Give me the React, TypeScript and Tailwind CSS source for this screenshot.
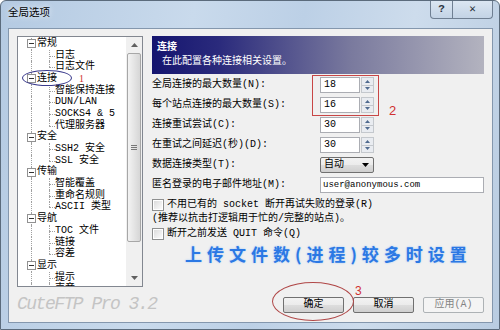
import React from 'react';

type TreeGroup = {
  label: string;
  children: string[];
};

const treeGroups: TreeGroup[] = [
  { label: '常规', children: ['日志', '日志文件'] },
  { label: '连接', children: ['智能保持连接', 'DUN/LAN', 'SOCKS4 & 5', '代理服务器'] },
  { label: '安全', children: ['SSH2 安全', 'SSL 安全'] },
  { label: '传输', children: ['智能覆盖', '重命名规则', 'ASCII 类型'] },
  { label: '导航', children: ['TOC 文件', '链接', '容差'] },
  { label: '显示', children: ['提示', '声音'] },
];

const formRows = [
  { label: '全局连接的最大数量(N):', kind: 'spin', value: '18' },
  { label: '每个站点连接的最大数量(S):', kind: 'spin', value: '16' },
  { label: '连接重试尝试(C):', kind: 'spin', value: '30' },
  { label: '在重试之间延迟(秒)(D):', kind: 'spin', value: '30' },
  { label: '数据连接类型(T):', kind: 'select', value: '自动' },
  { label: '匿名登录的电子邮件地址(M):', kind: 'email', value: 'user@anonymous.com' },
];

function Expander() {
  return (
    <span className="absolute left-[9px] top-[1px] flex h-[9px] w-[9px] items-center justify-center border border-[#919191] bg-white">
      <span className="h-px w-[5px] bg-[#333]" />
    </span>
  );
}

function TreeRootRow({ label }: { label: string }) {
  return (
    <div className="flex h-[11.7px] items-center">
      <div className="relative h-full w-[19px] shrink-0">
        <span className="absolute left-[13px] top-0 h-full border-l border-dotted border-[#a0a0a0]" />
        <Expander />
      </div>
      <span className="whitespace-nowrap leading-none">{label}</span>
    </div>
  );
}

function TreeChildRow({ label, last }: { label: string; last: boolean }) {
  return (
    <div className="flex h-[11.7px] items-center">
      <div className="relative h-full w-[19px] shrink-0">
        <span className="absolute left-[13px] top-0 h-full border-l border-dotted border-[#a0a0a0]" />
      </div>
      <div className="relative h-full w-[18px] shrink-0">
        <span
          className={`absolute left-[12px] top-0 border-l border-dotted border-[#a0a0a0] ${
            last ? 'h-1/2' : 'h-full'
          }`}
        />
        <span className="absolute left-[12px] top-1/2 w-[6px] border-t border-dotted border-[#a0a0a0]" />
      </div>
      <span className="whitespace-nowrap leading-none">{label}</span>
    </div>
  );
}

function TreeView() {
  return (
    <div className="flex h-[251px] w-[126px] border border-[#828790] bg-white">
      <div className="flex-1 overflow-hidden pt-px text-[10px] text-black">
        {treeGroups.map((group) => (
          <div key={group.label}>
            <TreeRootRow label={group.label} />
            {group.children.map((child, index) => (
              <TreeChildRow key={child} label={child} last={index === group.children.length - 1} />
            ))}
          </div>
        ))}
      </div>
      <div className="flex w-[16px] flex-col bg-[#f0f0f0]">
        <div className="flex h-[16px] items-center justify-center">
          <svg width="7" height="4" viewBox="0 0 7 4">
            <path d="M0 4 L3.5 0 L7 4 Z" fill="#606060" />
          </svg>
        </div>
        <div className="mx-px flex h-[189px] items-center justify-center rounded-[2px] border border-[#a7a7a7] bg-[linear-gradient(90deg,#f3f3f3,#e6e6e6_45%,#d6d6d6)]">
          <div className="flex flex-col gap-px">
            <span className="h-px w-[6px] bg-[#777]" />
            <span className="h-px w-[6px] bg-[#777]" />
            <span className="h-px w-[6px] bg-[#777]" />
          </div>
        </div>
        <div className="flex-1" />
        <div className="flex h-[16px] items-center justify-center">
          <svg width="7" height="4" viewBox="0 0 7 4">
            <path d="M0 0 L3.5 4 L7 0 Z" fill="#606060" />
          </svg>
        </div>
      </div>
    </div>
  );
}

function SpinBox({ value }: { value: string }) {
  return (
    <div className="flex h-[16px] w-[54px] items-stretch">
      <div className="flex flex-1 items-center border border-[#abadb3] bg-white pl-[3px] text-[10px] leading-none">
        {value}
      </div>
      <div className="ml-px flex w-[13px] flex-col border border-[#c4c8cd] bg-[#e9ecf1]">
        <div className="flex flex-1 items-center justify-center border-b border-[#c4c8cd]">
          <svg width="5" height="3" viewBox="0 0 5 3">
            <path d="M0 3 L2.5 0 L5 3 Z" fill="#4f6a8f" />
          </svg>
        </div>
        <div className="flex flex-1 items-center justify-center">
          <svg width="5" height="3" viewBox="0 0 5 3">
            <path d="M0 0 L2.5 3 L5 0 Z" fill="#4f6a8f" />
          </svg>
        </div>
      </div>
    </div>
  );
}

function SelectBox({ value }: { value: string }) {
  return (
    <div className="flex h-[16px] w-[54px] items-center justify-between rounded-[2px] border border-[#707070] bg-[linear-gradient(#f2f2f2,#ebebeb_50%,#dddddd_51%,#cfcfcf)] pl-[3px] pr-[4px] text-[10px] leading-none">
      <span>{value}</span>
      <svg width="7" height="4" viewBox="0 0 7 4">
        <path d="M0 0 L3.5 4 L7 0 Z" fill="#000" />
      </svg>
    </div>
  );
}

function Checkbox() {
  return (
    <span className="flex h-[12px] w-[12px] shrink-0 items-center justify-center border border-[#8e8f8f] bg-white">
      <span className="h-[8px] w-[8px] bg-[linear-gradient(135deg,#dcdcdc,#fbfbfb)]" />
    </span>
  );
}

function DialogButton({ children, disabled }: { children: React.ReactNode; disabled?: boolean }) {
  return (
    <button
      type="button"
      className={`flex h-[16px] w-[61px] items-center justify-center rounded-[2px] border text-[10px] leading-none ${
        disabled
          ? 'border-[#adb2b5] bg-[#f4f4f4] text-[#838383]'
          : 'border-[#707070] bg-[linear-gradient(#f2f2f2,#ebebeb_50%,#dddddd_51%,#cfcfcf)] text-black'
      }`}
    >
      {children}
    </button>
  );
}

export default function App() {
  return (
    <div className="relative h-[330px] w-[500px] overflow-hidden rounded-t-[6px] border border-[#5b6b7c] bg-[linear-gradient(100deg,#b4cae2,#c9daec_35%,#bcd0e6_55%,#cddcec_75%,#b9cce1)] font-['Liberation_Mono','Noto_Sans_CJK_SC',monospace] text-black">
      {/* title bar */}
      <div className="flex h-[27px] items-start justify-between">
        <span className="pl-[7px] pt-[6px] font-['Noto_Sans_CJK_SC',sans-serif] text-[10.5px] leading-none [text-shadow:0_0_6px_#ffffff]">
          全局选项
        </span>
        <div className="mr-[6px] flex h-[18px]">
          <div className="flex w-[23px] items-center justify-center rounded-bl-[4px] border border-t-0 border-[#6f7f92] bg-[linear-gradient(#dbe6f2,#c3d3e5)] text-[11px] font-bold text-[#2c3440]">
            ?
          </div>
          <div className="flex w-[40px] items-center justify-center rounded-br-[4px] border border-l-0 border-t-0 border-[#6f7f92] bg-[linear-gradient(#dbe6f2,#c3d3e5)] text-[11px] font-bold text-[#2c3440]">
            ✕
          </div>
        </div>
      </div>

      {/* client area */}
      <div className="ml-[7px] flex h-[295px] w-[485px] gap-[9px] border border-[#8497ad] bg-[#f0f0f0] pl-[8px] pt-[7px]">
        <div className="flex w-[126px] flex-col">
          <TreeView />
          <div className="mt-[7px] whitespace-nowrap font-['Liberation_Mono',monospace] text-[18px] italic leading-[20px] tracking-[-1.5px] text-[#c4c4c4]">
            CuteFTP Pro 3.2
          </div>
        </div>

        <div className="flex w-[332px] flex-col">
          <div className="flex h-[38px] flex-col justify-center gap-[4px] bg-[linear-gradient(90deg,#15156f,#2a2a7c_20%,#7a7a9e_60%,#b3b3bf)] pl-[5px] text-[10px] leading-none text-white">
            <span className="font-bold">连接</span>
            <span className="pl-[5px]">在此配置各种连接相关设置。</span>
          </div>

          <div className="mt-[3px] flex flex-col gap-[4px] text-[10px]">
            {formRows.map((row) => (
              <div key={row.label} className="flex h-[16px] items-center">
                <span className="w-[168px] shrink-0 whitespace-nowrap leading-none">{row.label}</span>
                {row.kind === 'spin' && <SpinBox value={row.value} />}
                {row.kind === 'select' && <SelectBox value={row.value} />}
                {row.kind === 'email' && (
                  <div className="flex h-[16px] w-[168px] items-center border border-[#abadb3] bg-white pl-[2px] text-[9px] leading-none">
                    {row.value}
                  </div>
                )}
              </div>
            ))}
          </div>

          <div className="mt-[5px] flex flex-col text-[10px] leading-none">
            <div className="flex h-[13px] items-center gap-[3px]">
              <Checkbox />
              <span className="whitespace-nowrap">不用已有的 socket 断开再试失败的登录(R)</span>
            </div>
            <div className="flex h-[16px] items-center whitespace-nowrap">(推荐以抗击打逻辑用于忙的/完整的站点)。</div>
            <div className="flex h-[13px] items-center gap-[3px]">
              <Checkbox />
              <span className="whitespace-nowrap">断开之前发送 QUIT 命令(Q)</span>
            </div>
          </div>

          <div className="flex h-[26px] items-center pl-[33px] font-['Noto_Sans_CJK_SC',sans-serif] text-[17px] font-bold leading-none tracking-[5px] text-[#2b78e4] [text-shadow:0_0_2px_#9cc4f5]">
            上传文件数(进程)较多时设置
          </div>

          <div className="mt-[31px] flex justify-end gap-[9px]">
            <DialogButton>确定</DialogButton>
            <DialogButton>取消</DialogButton>
            <DialogButton disabled>应用(A)</DialogButton>
          </div>
        </div>
      </div>

      {/* annotations */}
      <div className="pointer-events-none absolute left-[21px] top-[69px] h-[16px] w-[50px] rounded-[50%] border border-[#3a3a8c]" />
      <span className="pointer-events-none absolute left-[78px] top-[73px] font-['Liberation_Serif',serif] text-[10px] leading-none text-[#d03030]">
        1
      </span>
      <div className="pointer-events-none absolute left-[311px] top-[74px] h-[41px] w-[67px] border border-[#c84646]" />
      <span className="pointer-events-none absolute left-[388px] top-[103px] font-['Liberation_Sans',sans-serif] text-[13px] leading-none text-[#d03030]">
        2
      </span>
      <div className="pointer-events-none absolute left-[271px] top-[281px] h-[39px] w-[82px] rounded-[50%] border border-[#b04848]" />
      <span className="pointer-events-none absolute left-[354px] top-[284px] font-['Liberation_Sans',sans-serif] text-[12px] leading-none text-[#d03030]">
        3
      </span>
    </div>
  );
}
